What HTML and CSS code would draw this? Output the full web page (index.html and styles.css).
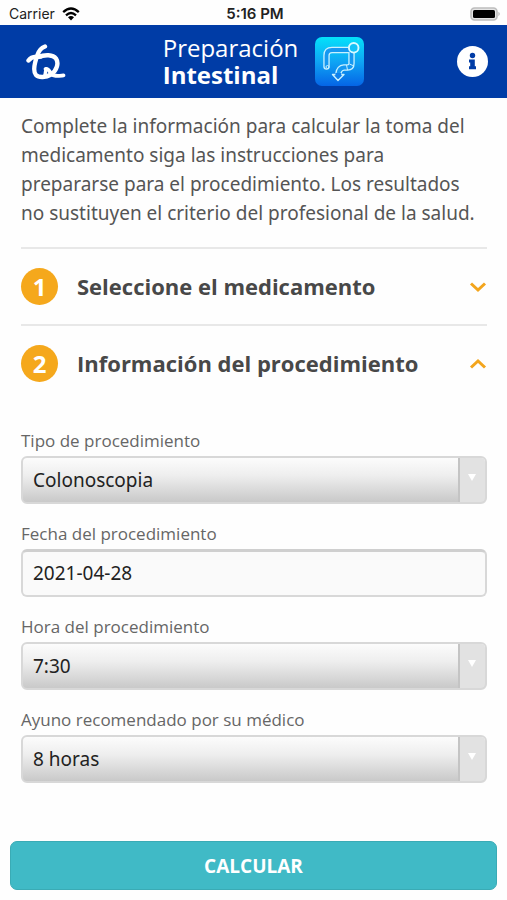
FILE: index.html
```html
<!DOCTYPE html>
<html lang="es">
<head>
  <meta charset="utf-8">
  <meta name="viewport" content="width=device-width, initial-scale=1">
  <title>Preparación Intestinal</title>
  <link rel="stylesheet" href="styles.css">
</head>
<body>
  <div class="status">
    <div class="status-left">
      <span>Carrier</span>
      <svg class="wifi" viewBox="0 0 18 14" aria-hidden="true">
        <path d="M1.2 5.2Q9-2.2 16.8 5.2M4 8.3Q9 3.8 14 8.3" fill="none" stroke="#000" stroke-width="2.3"/>
        <path d="M6 10.2Q9 7.8 12 10.2L9 13.4Z"/>
      </svg>
    </div>
    <span class="clock">5:16 PM</span>
    <div class="status-right">
      <svg class="battery" viewBox="0 0 31 14" aria-hidden="true">
        <rect x="1" y="1" width="26" height="12" rx="3.5" fill="#e4e4e4" stroke="#bdbdbd" stroke-width="1.6"/>
        <rect x="3" y="3" width="22" height="8" rx="1.5"/>
        <path d="M28.5 4.8Q30.8 7 28.5 9.2Z" fill="#a8a8a8"/>
      </svg>
    </div>
  </div>

  <header class="header">
    <a class="logo" href="#" aria-label="Inicio">
      <svg viewBox="0 0 40 36" fill="none" stroke="#fff" stroke-linecap="round" stroke-linejoin="round" aria-hidden="true">
        <path d="M2.500 16.500Q5 13 10 12.800L15 12.500" stroke-width="4.400"/>
        <path d="M19 2.500Q13.500 4.500 11.500 11C8.500 19 6.500 27 10 31C13 34 20 33.500 25 30.500C31 26.500 33 19 30 14.500C27 10.500 19 10.500 12 13" stroke-width="4.400"/>
        <path d="M19.500 25C22.500 24 23 27 25 29.500C28 33 32 32 37.500 31.300" stroke-width="3.800"/>
        <path d="M20 25L19 31" stroke-width="3.400"/>
      </svg>
    </a>
    <div class="brand">
      <h1 class="title">Preparación<strong>Intestinal</strong></h1>
      <svg class="app-icon" viewBox="0 0 49 49" fill="none" aria-hidden="true">
        <defs>
          <linearGradient id="sky" x1="0" y1="0" x2="0" y2="1">
            <stop offset="0" stop-color="#04e2fa"/>
            <stop offset="0.500" stop-color="#0fa5f4"/>
            <stop offset="1" stop-color="#0565e6"/>
          </linearGradient>
        </defs>
        <rect width="49" height="49" rx="7" fill="url(#sky)"/>
        <path d="M11.500 29.500V18.500Q11.500 13 17 13H36.500V26.500Q36.500 30.500 32.500 30.500H29Q24 31 23.300 37" stroke="#c9f1ff" stroke-width="6.400" stroke-linecap="round" stroke-linejoin="round"/>
        <path d="M11.500 29.500V18.500Q11.500 13 17 13H36.500V26.500Q36.500 30.500 32.500 30.500H29Q24 31 23.300 37" stroke="#1598f1" stroke-width="3.800" stroke-linecap="round" stroke-linejoin="round"/>
        <path d="M20.300 37.500H17.500L23 43.500L29 37.500H26.300V36H20.300Z" fill="#0f80ec"/>
        <path d="M20.300 37.500H17.500L23 43.500L29 37.500H26.300" stroke="#c9f1ff" stroke-width="1.400" stroke-linejoin="round"/>
        <circle cx="12.500" cy="30" r="1.500" stroke="#c9f1ff"/>
        <path d="M31.500 28L32.500 33M34.500 27L39 29" stroke="#c9f1ff"/>
        <circle cx="38.700" cy="10.800" r="4.800" fill="#12c2f7" stroke="#d8faff" stroke-width="1.900"/>
      </svg>
    </div>
    <button class="info" type="button" aria-label="Información">
      <svg viewBox="0 0 31 31" aria-hidden="true">
        <circle cx="15.500" cy="15.500" r="15.500" fill="#fff"/>
        <circle cx="15.500" cy="9.500" r="2.700" fill="#003ca6"/>
        <path d="M12 13.500H17.800V20.300H19V23.200H12V20.300H13.200V16.400H12Z" fill="#003ca6"/>
      </svg>
    </button>
  </header>

  <main class="content">
    <p class="intro">Complete la información para calcular la toma del medicamento siga las instrucciones para prepararse para el procedimiento. Los resultados no sustituyen el criterio del profesional de la salud.</p>

    <h2 class="step">
      <button class="step-toggle" type="button" aria-expanded="false">
        <span class="number">1</span>
        <span class="step-name">Seleccione el medicamento</span>
        <svg class="chevron" viewBox="0 0 18 12" aria-hidden="true"><path d="M2 2.500L9 9L16 2.500"/></svg>
      </button>
    </h2>
    <h2 class="step">
      <button class="step-toggle" type="button" aria-expanded="true">
        <span class="number">2</span>
        <span class="step-name">Información del procedimiento</span>
        <svg class="chevron" viewBox="0 0 18 12" aria-hidden="true"><path d="M2 9.500L9 3L16 9.500"/></svg>
      </button>
    </h2>

    <form class="form" id="procedure">
      <div class="field">
        <label for="type">Tipo de procedimiento</label>
        <div class="select-box"><select id="type"><option>Colonoscopia</option></select></div>
      </div>
      <div class="field">
        <label for="date">Fecha del procedimiento</label>
        <input id="date" type="text" value="2021-04-28">
      </div>
      <div class="field">
        <label for="time">Hora del procedimiento</label>
        <div class="select-box"><select id="time"><option>7:30</option></select></div>
      </div>
      <div class="field">
        <label for="fasting">Ayuno recomendado por su médico</label>
        <div class="select-box"><select id="fasting"><option>8 horas</option></select></div>
      </div>
    </form>
  </main>

  <footer class="footer">
    <button class="calculate" type="submit" form="procedure">CALCULAR</button>
  </footer>
</body>
</html>
```

FILE: styles.css
```css
* {
  box-sizing: border-box;
}

body {
  margin: 0;
  min-height: 100vh;
  display: flex;
  flex-direction: column;
  background: #fefefe;
  color: #555;
  font-family: "Open Sans", "Noto Sans", sans-serif;
}

button {
  border: 0;
  padding: 0;
  background: none;
  font-family: inherit;
  cursor: pointer;
}

svg {
  display: block;
}

.status {
  display: grid;
  grid-template-columns: 1fr auto 1fr;
  align-items: center;
  height: 25px;
  padding: 2px 6px 0 9px;
  color: #222;
  font: 14px/20px Inter, "Liberation Sans", sans-serif;
}

.status-left {
  display: flex;
  align-items: center;
  gap: 7px;
}

.status-right {
  display: flex;
  justify-content: flex-end;
}

.clock {
  font-size: 15px;
  font-weight: 600;
}

.wifi {
  width: 18px;
  height: 14px;
}

.battery {
  width: 31px;
  height: 14px;
}

.header {
  display: flex;
  align-items: center;
  justify-content: space-between;
  height: 73px;
  padding: 0 19px 0 26px;
  background: #003ca6;
  color: #fff;
}

.logo svg {
  width: 40px;
  height: 36px;
}

.brand {
  display: flex;
  align-items: center;
  gap: 17px;
  padding-left: 4px;
}

.title {
  margin: 0;
  padding-bottom: 2px;
  font-size: 24px;
  line-height: 27px;
  font-weight: 500;
}

.title strong {
  display: block;
  font-weight: 700;
}

.app-icon {
  width: 49px;
  height: 49px;
}

.info svg {
  width: 31px;
  height: 31px;
}

.content {
  flex: 1;
  padding: 14px 20px 0 21px;
}

.intro {
  margin: 0 0 19px;
  padding-right: 8px;
  font-family: "Noto Sans", "Open Sans", sans-serif;
  font-size: 19px;
  line-height: 29px;
}

.step {
  margin: 0;
  border-top: 2px solid #e8e8e8;
}

.step-toggle {
  display: flex;
  align-items: center;
  gap: 19px;
  width: 100%;
  height: 75px;
  color: #484848;
  font-size: 22px;
  line-height: 30px;
  font-weight: 700;
  text-align: left;
}

.number {
  width: 37px;
  height: 37px;
  border-radius: 50%;
  background: #f5a81c;
  color: #fff;
  font-size: 24px;
  line-height: 37px;
  text-align: center;
}

.step-name {
  flex: 1;
  padding-bottom: 2px;
}

.chevron {
  width: 18px;
  height: 12px;
  fill: none;
  stroke: #f3a51d;
  stroke-width: 3;
}

.form {
  display: flex;
  flex-direction: column;
  gap: 18px;
  padding: 28px 0 24px;
}

.field label {
  display: block;
  padding-bottom: 3px;
  color: #666;
  font-size: 17px;
  line-height: 24px;
}

.field input,
.field select {
  display: block;
  width: 100%;
  height: 48px;
  margin: 0;
  padding: 0 10px;
  border: 2px solid #d8d8d8;
  border-radius: 6px;
  color: #222;
  font: 19px/26px "Noto Sans", "Open Sans", sans-serif;
}

.field input {
  padding-bottom: 2px;
  background: #fafafa;
  border-top: 3px solid #cfcfcf;
}

.field select {
  appearance: none;
  padding-right: 38px;
  background: linear-gradient(#fcfcfc, #eee 40%, #c9c9c9);
}

.select-box {
  position: relative;
}

.select-box::before {
  content: "";
  position: absolute;
  top: 2px;
  right: 2px;
  bottom: 2px;
  width: 25px;
  border-left: 2px solid #c4c4c4;
  border-radius: 0 4px 4px 0;
  background: #e2e2e2;
  pointer-events: none;
}

.select-box::after {
  content: "";
  position: absolute;
  top: 18px;
  right: 11px;
  border: 4px solid transparent;
  border-top: 7px solid #fff;
  border-bottom: 0;
  pointer-events: none;
}

.footer {
  padding: 0 10px 10px;
}

.calculate {
  display: block;
  width: 100%;
  height: 49px;
  border: 1px solid #3aabb5;
  border-radius: 7px;
  background: #40bac6;
  color: #fff;
  font-size: 19px;
  line-height: 26px;
  font-weight: 700;
}
```
